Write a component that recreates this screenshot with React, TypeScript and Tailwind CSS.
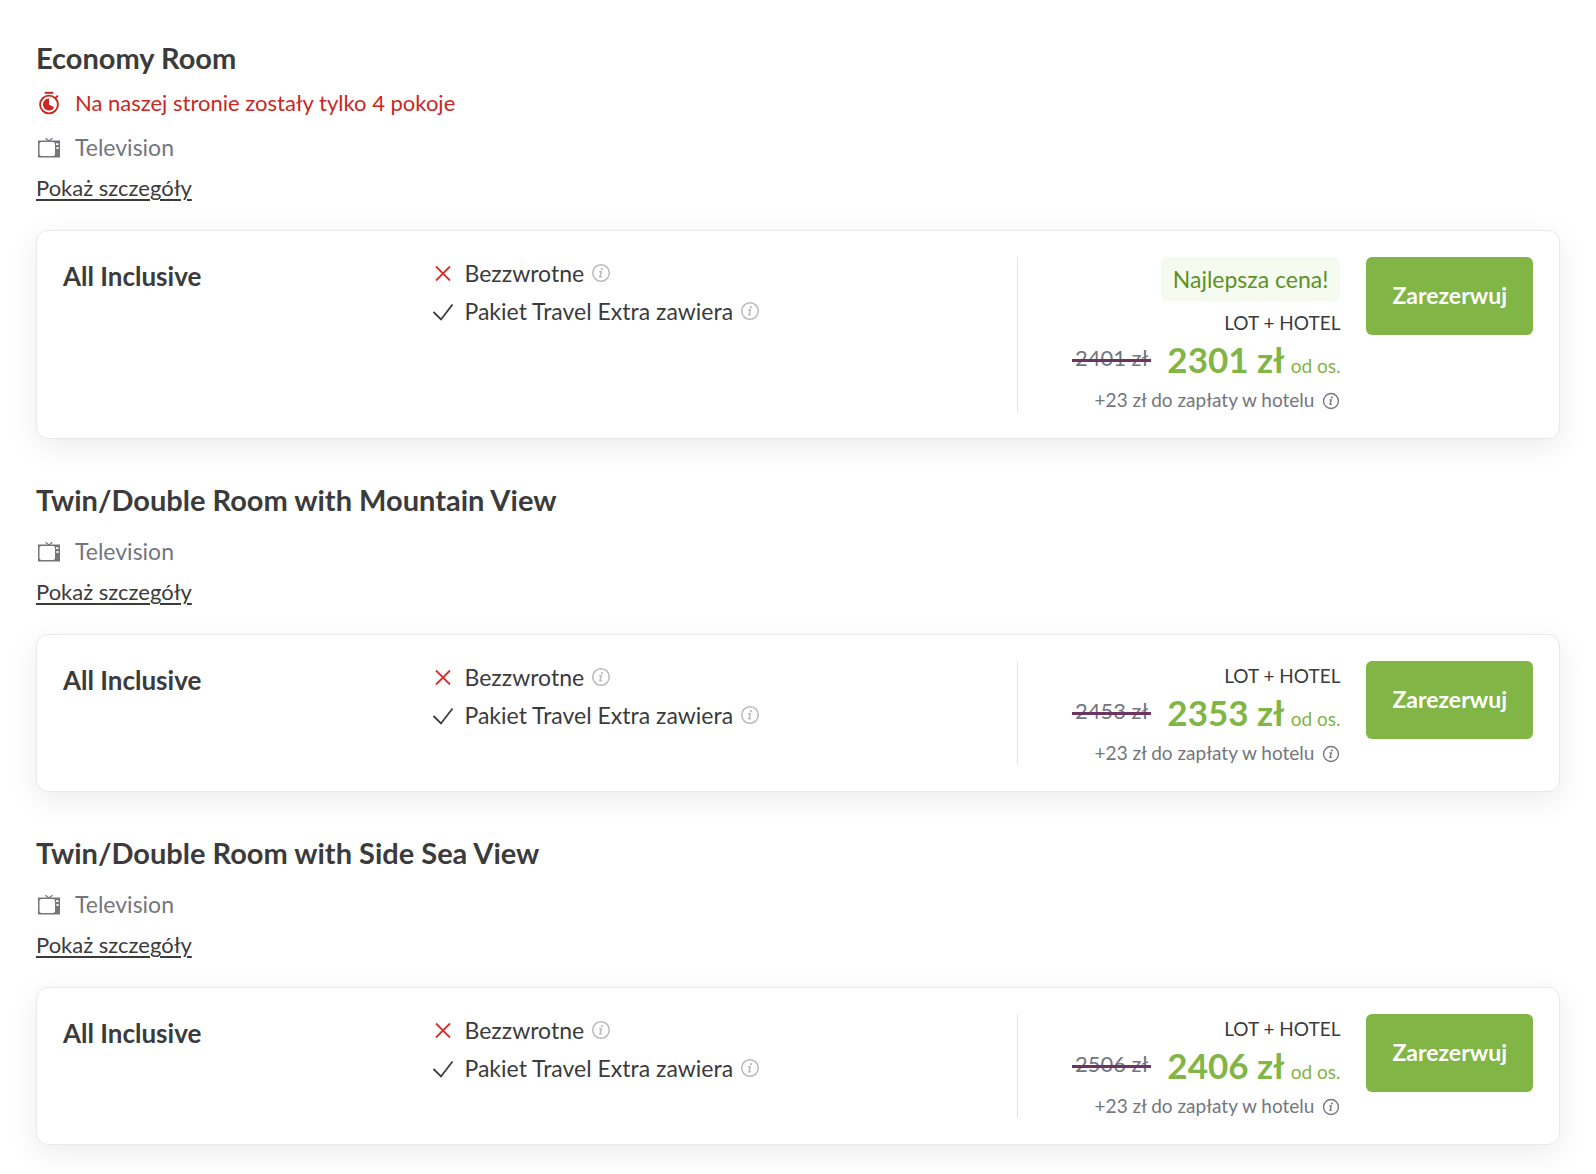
import { memo } from "react";

type TRoom = {
  id: string;
  name: string;
  alert?: string;
  best?: boolean;
  oldPrice: number;
  price: number;
};

const rooms: TRoom[] = [
  {
    id: "economy",
    name: "Economy Room",
    alert: "Na naszej stronie zostały tylko 4 pokoje",
    best: true,
    oldPrice: 2401,
    price: 2301,
  },
  {
    id: "mountain",
    name: "Twin/Double Room with Mountain View",
    oldPrice: 2453,
    price: 2353,
  },
  {
    id: "sea",
    name: "Twin/Double Room with Side Sea View",
    oldPrice: 2506,
    price: 2406,
  },
];

// icons
const Timer = () => (
  <svg className="h-6 w-[26px]" viewBox="0 0 24 24" fill="none" stroke="currentColor">
    <path d="M7.7 1.8h8.6" strokeWidth="2" />
    <path d="M18.2 7.2l2.6-2.6" strokeWidth="2" />
    <circle cx="12" cy="13.5" r="8.9" strokeWidth="1.9" />
    <path
      d="M12 7.4v6.1l5.3 3.1A6.1 6.1 0 1 1 12 7.4z"
      fill="currentColor"
      stroke="none"
    />
  </svg>
);

const Tv = () => (
  <svg className="h-6 w-[26px]" viewBox="0 0 24 24" fill="none">
    <path d="M8.5 3.2l3.5 2.8 3.5-2.8" stroke="currentColor" strokeWidth="1.2" />
    <path
      fillRule="evenodd"
      fill="currentColor"
      d="M1 5.500h22V22.500H1zM4.500 7Q2.500 7 2.500 9v10Q2.500 21 4.500 21h11.500Q18 21 18 19V9Q18 7 16 7zM19 8.200v1.800h2.500v-1.800zM19.500 12v2h2v-2z"
    />
  </svg>
);

const Cross = () => (
  <svg className="h-6 w-6" viewBox="0 0 24 24" fill="none" stroke="currentColor">
    <path d="M5 5.5l14 14M19 5.5l-14 14" strokeWidth="1.8" />
  </svg>
);

const Check = () => (
  <svg className="h-6 w-6" viewBox="0 0 24 24" fill="none" stroke="currentColor">
    <path d="M2.5 13l7.5 7.5L21.5 5.5" strokeWidth="1.8" />
  </svg>
);

const Info = ({ className }: { className: string }) => (
  <svg className={className} viewBox="0 0 20 20" fill="none" stroke="currentColor">
    <circle cx="10" cy="10" r="8.3" strokeWidth="1.5" />
    <path d="M8.2 8.7h2l-1.2 5.1h1.9" strokeWidth="1.5" />
    <circle cx="10.9" cy="6.2" r="1.1" fill="currentColor" stroke="none" />
  </svg>
);

const Room = memo(({ name, alert, best, oldPrice, price }: TRoom) => {
  return (
    <section>
      <h2 className="text-[29px] leading-9 font-bold">{name}</h2>
      {alert && (
        <p className="mt-[11px] flex items-center gap-[13px] text-[22px] leading-8 text-[#cb2621]">
          <Timer />
          {alert}
        </p>
      )}
      <p
        className={`${
          alert ? "mt-3" : "mt-[17px]"
        } flex items-center gap-[13px] text-[#75757d]`}
      >
        <Tv />
        Television
      </p>
      <button className="mt-[9px] block text-[22px] leading-8 underline decoration-2 underline-offset-[3px]">
        Pokaż szczegóły
      </button>

      <div className="mt-[26px] flex rounded-xl border border-[#e9e9ea] bg-white p-[26px] shadow-[0_8px_30px_rgba(0,0,0,0.08)]">
        <h3 className="w-1/4 text-[26px] leading-[38px] font-bold">
          All Inclusive
        </h3>
        <ul className="flex flex-1 flex-col gap-[6px]">
          <li className="flex items-center">
            <span className="mr-[10px] text-[#d4322d]">
              <Cross />
            </span>
            Bezzwrotne
            <button aria-label="Bezzwrotne" className="ml-[7px] text-[#bababd]">
              <Info className="h-5 w-5" />
            </button>
          </li>
          <li className="flex items-center">
            <span className="mr-[10px]">
              <Check />
            </span>
            Pakiet Travel Extra zawiera
            <button
              aria-label="Pakiet Travel Extra"
              className="ml-[7px] text-[#bababd]"
            >
              <Info className="h-5 w-5" />
            </button>
          </li>
        </ul>
        <div className="flex w-[22%] flex-col items-end border-l border-[#e5e5e6] text-[19px]">
          {best && (
            <span className="mb-[7px] rounded-md bg-[#f5fbf0] px-3 py-[6px] text-[23px] leading-8 text-[#5d9126]">
              Najlepsza cena!
            </span>
          )}
          <span className="leading-[30px]">LOT + HOTEL</span>
          <div className="flex items-baseline leading-5 text-[#81b545]">
            <del className="relative mr-4 self-start px-[3px] text-[22px] leading-10 text-[#75757d] no-underline">
              {oldPrice} zł
              <span className="absolute inset-x-0 top-[21px] h-[3px] bg-[#6b3562]" />
            </del>
            <strong className="mr-[6px] text-[35px] leading-[42px]">
              {price} zł
            </strong>
            od os.
          </div>
          <div className="mt-2 flex items-center leading-6 text-[#75757d]">
            +23 zł do zapłaty w hotelu
            <button aria-label="Opłata w hotelu" className="mt-0.5 ml-2">
              <Info className="h-[18px] w-[18px]" />
            </button>
          </div>
        </div>
        <button className="ml-[26px] h-[78px] self-start rounded-md bg-[#81b545] px-[26px] pb-0.5 font-bold text-white">
          Zarezerwuj
        </button>
      </div>
    </section>
  );
});

export default function App() {
  return (
    <main className="flex min-h-screen flex-col gap-[43px] bg-white px-9 pt-10 pb-7 font-['Lato',sans-serif] text-[23px] leading-8 text-[#3b3b3c]">
      {rooms.map((room) => (
        <Room key={room.id} {...room} />
      ))}
    </main>
  );
}
